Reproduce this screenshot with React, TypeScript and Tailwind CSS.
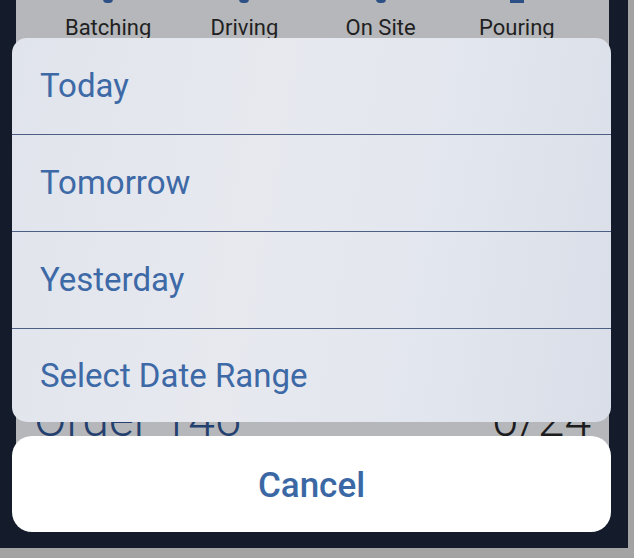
import React from "react";

const options = ["Today", "Tomorrow", "Yesterday", "Select Date Range"];

export default function App() {
  return (
    <div
      className="relative w-[634px] h-[558px] overflow-hidden bg-[#a3a3a3] flex"
      style={{ fontFamily: "Roboto, 'Noto Sans', sans-serif" }}
    >
      <div className="w-[628px] h-[558px] flex flex-col">
        <div className="h-[548px] bg-[#141b2b] pl-[16px] pr-[19px] flex flex-col">
          <div className="h-[470px] bg-[#b6b7ba] relative">
            <div className="flex h-[40px] px-[24px]">
              {["Batching", "Driving", "On Site", "Pouring"].map((l, i) => (
                <div key={l} className="flex-1 flex flex-col items-center">
                  <div className="h-[16px] flex items-start justify-center">
                    {i === 3 ? (
                      <div className="w-[14px] h-[3px] bg-[#2c4f86]" />
                    ) : (
                      <div className="w-[10px] h-[4px] rounded-b-full bg-[#2c4f86] mt-[-1px]" />
                    )}
                  </div>
                  <div className="text-[22px] leading-[24px] text-[#1f1f22]">{l}</div>
                </div>
              ))}
            </div>
            <div className="flex justify-between items-end mt-[352px] px-[18px]">
              <div className="text-[48px] font-light leading-[56px] text-[#23406e]">Order 146</div>
              <div className="text-[48px] font-light leading-[56px] text-[#1c1c20]">0/24</div>
            </div>
          </div>
        </div>
        <div className="h-[10px] bg-[#a3a3a3]" />
      </div>

      <div className="absolute left-[12px] top-[38px] w-[599px] h-[384px] rounded-[15px] overflow-hidden bg-[linear-gradient(100deg,#e0e4ec_0%,#e7e9ef_40%,#e2e6ee_70%,#dadee8_100%)] flex flex-col">
        {options.map((o, i) => (
          <div
            key={o}
            className={
              "flex items-center pl-[28px] text-[33px] text-[#3d69a6] " +
              (i < options.length - 1 ? "h-[97px] border-b border-[#4e5f86]" : "flex-1")
            }
          >
            {o}
          </div>
        ))}
      </div>

      <div className="absolute left-[12px] top-[436px] w-[599px] h-[96px] rounded-[20px] bg-white flex items-center justify-center">
        <span className="text-[35px] font-medium text-[#3b68a5] mt-[4px]">Cancel</span>
      </div>
    </div>
  );
}
